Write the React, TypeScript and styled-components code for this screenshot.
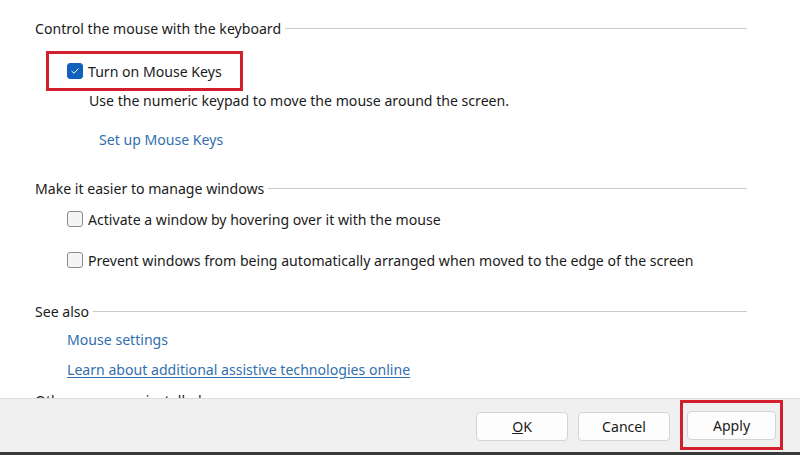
import React from 'react'
import styled, { createGlobalStyle } from 'styled-components'

const GlobalStyle = createGlobalStyle`
    html, body {
        margin: 0;
        padding: 0;
        background: #ffffff;
    }
    body {
        font-family: "Noto Sans", "Open Sans", sans-serif;
        color: #1b1b1b;
    }
`

const FONT = '14.1px'

function Checkbox({ checked }: { checked?: boolean }) {
    return (
        <Box checked={checked}>
            {checked && (
                <svg width="10" height="10" viewBox="0 0 10 10">
                    <path d="M1.8 5.2 L4 7.3 L8.2 2.8" fill="none" stroke="#ffffff" strokeWidth="1" strokeLinecap="round" strokeLinejoin="round" />
                </svg>
            )}
        </Box>
    )
}

function App() {
    return (
        <>
            <GlobalStyle />
            <Window>
                <Content>
                    <Heading>
                        <HeadingText>Control the mouse with the keyboard</HeadingText>
                        <Rule />
                    </Heading>

                    <Highlight>
                        <OptionRow>
                            <Checkbox checked />
                            <Label>Turn on Mouse Keys</Label>
                        </OptionRow>
                    </Highlight>

                    <Description>Use the numeric keypad to move the mouse around the screen.</Description>

                    <Link indent={64} top={19}>Set up Mouse Keys</Link>

                    <Heading top={27}>
                        <HeadingText>Make it easier to manage windows</HeadingText>
                        <Rule />
                    </Heading>

                    <PlainRow top={8}>
                        <Checkbox />
                        <Label>Activate a window by hovering over it with the mouse</Label>
                    </PlainRow>
                    <PlainRow top={17}>
                        <Checkbox />
                        <Label>Prevent windows from being automatically arranged when moved to the edge of the screen</Label>
                    </PlainRow>

                    <Heading top={28}>
                        <HeadingText>See also</HeadingText>
                        <Rule />
                    </Heading>

                    <Link indent={32} top={8}>Mouse settings</Link>
                    <Link indent={32} top={10} underline>Learn about additional assistive technologies online</Link>

                    {/* next group peeks out above the footer, as in the dialog */}
                    <Heading top={9}>
                        <HeadingText>Other programs installed</HeadingText>
                        <Rule />
                    </Heading>
                </Content>

                <Footer>
                    <Button><u>O</u>K</Button>
                    <Button>Cancel</Button>
                    <ButtonHighlight>
                        <Button>Apply</Button>
                    </ButtonHighlight>
                </Footer>
                <BottomEdge />
            </Window>
        </>
    )
}

export default App

const Window = styled.div`
    width: 800px;
    height: 455px;
    display: flex;
    flex-direction: column;
    overflow: hidden;
    background: #ffffff;
`

const Content = styled.div`
    height: 398px;
    overflow: hidden;
    padding: 17px 53px 0 35px;
    box-sizing: border-box;
    display: flex;
    flex-direction: column;
    flex-shrink: 0;
`

const Heading = styled.div<{ top?: number }>`
    display: flex;
    align-items: center;
    height: 22px;
    flex-shrink: 0;
    margin-top: ${(p) => p.top ?? 0}px;
`

const HeadingText = styled.span`
    font-size: ${FONT};
    white-space: nowrap;
    color: #1b1b1b;
`

const Rule = styled.div`
    flex: 1;
    height: 1px;
    margin-left: 4px;
    background: #c9c9c9;
`

const Highlight = styled.div`
    margin: 12px 0 0 11px;
    width: 197px;
    height: 40px;
    box-sizing: border-box;
    border: 3px solid #d21f2d;
    display: flex;
    align-items: center;
    padding-left: 18px;
    flex-shrink: 0;
`

const OptionRow = styled.div`
    display: flex;
    align-items: center;
    gap: 5px;
`

const PlainRow = styled.div<{ top?: number }>`
    display: flex;
    align-items: center;
    gap: 5px;
    height: 24px;
    padding-left: 32px;
    flex-shrink: 0;
    margin-top: ${(p) => p.top ?? 0}px;
`

const Box = styled.span<{ checked?: boolean }>`
    width: 16px;
    height: 16px;
    box-sizing: border-box;
    border-radius: 3px;
    display: inline-flex;
    align-items: center;
    justify-content: center;
    flex-shrink: 0;
    background: ${(p) => (p.checked ? '#1160bd' : '#f4f4f4')};
    border: 1px solid ${(p) => (p.checked ? '#1160bd' : '#8c8c8c')};
`

const Label = styled.span`
    font-size: ${FONT};
    white-space: nowrap;
    color: #1b1b1b;
`

const Description = styled.div`
    font-size: ${FONT};
    height: 20px;
    line-height: 20px;
    margin-left: 54px;
    white-space: nowrap;
    flex-shrink: 0;
`

const Link = styled.div<{ indent: number; top: number; underline?: boolean }>`
    font-size: ${FONT};
    height: 20px;
    line-height: 20px;
    color: #2f6fae;
    white-space: nowrap;
    flex-shrink: 0;
    margin-left: ${(p) => p.indent}px;
    margin-top: ${(p) => p.top}px;
    text-decoration: ${(p) => (p.underline ? 'underline' : 'none')};
    text-underline-offset: 2px;
`

const Footer = styled.div`
    height: 54px;
    box-sizing: border-box;
    background: #f0f0f0;
    border-top: 1px solid #dcdcdc;
    display: flex;
    justify-content: flex-end;
    align-items: flex-start;
    gap: 10px;
    padding-right: 17px;
    flex-shrink: 0;
`

const Button = styled.div`
    width: 92px;
    height: 29px;
    margin-top: 13px;
    box-sizing: border-box;
    background: #fdfdfd;
    border: 1px solid #d3d3d3;
    border-radius: 4px;
    display: flex;
    align-items: center;
    justify-content: center;
    font-size: ${FONT};
    color: #1b1b1b;
`

const ButtonHighlight = styled.div`
    width: 103px;
    height: 50px;
    margin-top: 1px;
    box-sizing: border-box;
    border: 3px solid #d21f2d;
    display: flex;
    justify-content: center;

    ${Button} {
        width: 89px;
        margin-top: 8px;
    }
`

const BottomEdge = styled.div`
    height: 3px;
    background: #3a3a3a;
    flex-shrink: 0;
`
